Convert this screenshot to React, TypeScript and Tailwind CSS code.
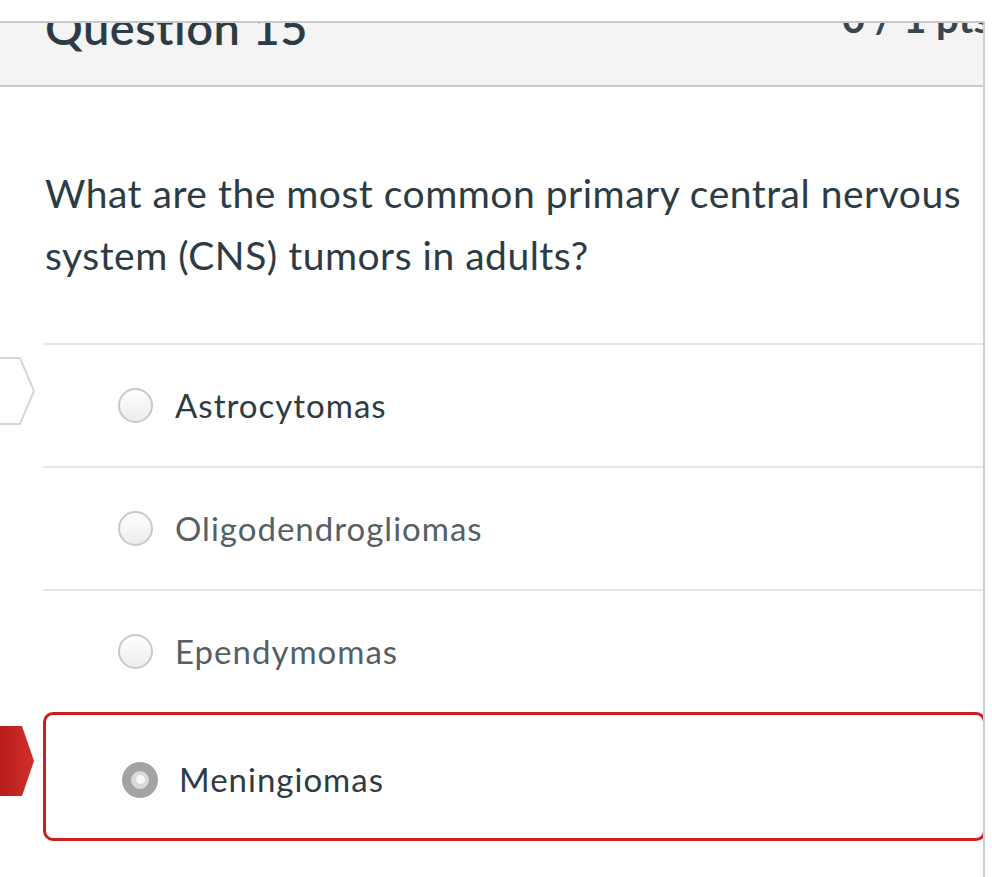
import React from 'react';

type Answer = { id: string; label: string; tone: 'dark' | 'muted' };

const answers: Answer[] = [
  { id: 'a', label: 'Astrocytomas', tone: 'dark' },
  { id: 'b', label: 'Oligodendrogliomas', tone: 'muted' },
  { id: 'c', label: 'Ependymomas', tone: 'muted' },
];

const Radio: React.FC<{ checked?: boolean }> = ({ checked }) =>
  checked ? (
    <span className="w-[36px] h-[36px] rounded-full bg-[#a3a3a3] flex items-center justify-center shrink-0">
      <span className="w-[18px] h-[18px] rounded-full bg-[#d9d9d9] flex items-center justify-center">
        <span className="w-[9px] h-[9px] rounded-full bg-[#f7f7f7]" />
      </span>
    </span>
  ) : (
    <span className="w-[35px] h-[35px] rounded-full border-2 border-[#c9c9c9] bg-gradient-to-b from-white to-[#ececec] shrink-0" />
  );

const OutlineArrow: React.FC = () => (
  <svg width="36" height="68" viewBox="0 0 36 68" className="absolute left-[-43px] top-[12px]">
    <polygon points="-2,1 20,1 34,34 20,67 -2,67" fill="#fff" stroke="#d6d6d6" strokeWidth="2" />
  </svg>
);

const RedArrow: React.FC = () => (
  <svg width="36" height="70" viewBox="0 0 36 70" className="absolute left-[-44px] top-[14px]">
    <defs>
      <linearGradient id="redg" x1="0" y1="0" x2="1" y2="0">
        <stop offset="0" stopColor="#b51d1b" />
        <stop offset="1" stopColor="#d2302a" />
      </linearGradient>
    </defs>
    <polygon points="0,0 23,0 35,35 23,70 0,70" fill="url(#redg)" />
  </svg>
);

export default function App() {
  return (
    <div className="min-h-[877px] bg-white pt-[21px] font-['Lato',sans-serif] text-[#2d3b45]">
      <div className="w-[985px] min-h-[856px] border-r-2 border-[#cdd0d2] overflow-hidden">
        <header className="h-[66px] bg-[#f4f4f4] border-y-2 border-[#c9c9c9] overflow-hidden flex justify-between items-start pl-[45px]">
          <h2 className="text-[47px] leading-none font-semibold mt-[-19px] tracking-[0.5px]">Question 15</h2>
          <span className="text-[40px] leading-none font-bold mt-[-25px] mr-[-8px] text-[#3b454c]">0 / 1 pts</span>
        </header>

        <div className="pl-[43px]">
          <p className="mt-[75px] mb-[57px] pl-[2px] text-[39px] leading-[62px] tracking-[0.5px]">
            What are the most common primary central nervous system (CNS) tumors in adults?
          </p>

          {answers.map((a, i) => (
            <div
              key={a.id}
              className="relative h-[123px] border-t-2 border-[#e4e6e8] flex items-center gap-[22px] pl-[75px]"
            >
              {i === 0 && <OutlineArrow />}
              <Radio />
              <span className={`text-[33px] tracking-[1px] ${a.tone === 'dark' ? 'text-[#2d3b45]' : 'text-[#555f66]'}`}>
                {a.label}
              </span>
            </div>
          ))}

          <div className="relative">
            <RedArrow />
            <div className="h-[129px] mr-[-3px] border-[3px] border-[#cc1f24] rounded-[10px] flex items-center gap-[21px] pl-[76px] pt-[6px]">
              <Radio checked />
              <span className="text-[33px] tracking-[1px] text-[#2d3b45]">Meningiomas</span>
            </div>
          </div>
        </div>
      </div>
    </div>
  );
}
